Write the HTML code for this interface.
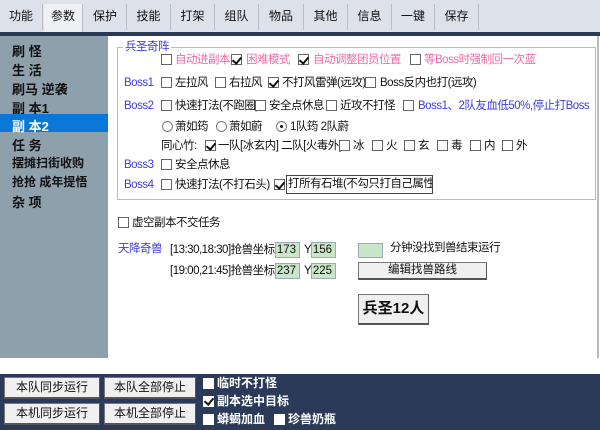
<!DOCTYPE html>
<html><head><meta charset="utf-8"><style>
*{margin:0;padding:0;box-sizing:border-box}
body{width:600px;height:430px;overflow:hidden;background:#fff;font-family:"Liberation Sans","Noto Sans CJK SC",sans-serif;font-size:11.5px;color:#111;position:relative}
.a{position:absolute;white-space:nowrap;line-height:14px;letter-spacing:-0.5px}
.tabs{position:absolute;left:0;top:0;width:600px;height:32px;background:#dde1ea}
.tab{position:absolute;top:4px;height:26px;line-height:24px;text-align:center;font-size:12px;border-right:1px solid #b8bcc6}
.sel{background:#eef0f4;height:28px}
.nav{position:absolute;left:0;top:32px;width:600px;height:4px;background:#2b3a55}
.side{position:absolute;left:0;top:36px;width:108px;height:322px;background:#8fa0ad}
.si{position:absolute;left:12px;font-weight:bold;font-size:13px;color:#111;white-space:nowrap}
.cb{position:absolute;width:11px;height:11px;border:1px solid #666;background:#fff}
.cb.c::after{content:"";position:absolute;left:2px;top:0px;width:4px;height:7px;border:solid #111;border-width:0 2px 2px 0;transform:rotate(40deg)}
.rd{position:absolute;width:11px;height:11px;border:1px solid #777;border-radius:50%;background:#fff}
.rd.c::after{content:"";position:absolute;left:3px;top:3px;width:3px;height:3px;border-radius:50%;background:#111}
.pk{color:#f06aa8}.bl{color:#3a3ae8}
.in{position:absolute;height:16px;background:#c9e6c9;border:1px solid #9ab;text-align:right;padding-right:3px;line-height:14px;font-size:11.5px}
.btn{position:absolute;background:#f0f0f0;border:1px solid #777;border-right-color:#555;border-bottom:2px solid #555;text-align:center;font-size:12px;white-space:nowrap}
.bot{position:absolute;left:0;top:374px;width:600px;height:56px;background:#2b3a58}
.wb{position:absolute;width:11px;height:11px;background:#fff}
.wb.c::after{content:"";position:absolute;left:3px;top:0px;width:4px;height:7px;border:solid #111;border-width:0 2px 2px 0;transform:rotate(40deg)}
.wt{position:absolute;color:#fff;font-weight:bold;font-size:12px;line-height:14px;white-space:nowrap}
</style></head><body>
<div class="tabs">
<div class="tab" style="left:0;width:43px">功能</div>
<div class="tab sel" style="left:44px;width:39px">参数</div>
<div class="tab" style="left:84px;width:43px">保护</div>
<div class="tab" style="left:127px;width:44px">技能</div>
<div class="tab" style="left:171px;width:44px">打架</div>
<div class="tab" style="left:215px;width:44px">组队</div>
<div class="tab" style="left:259px;width:45px">物品</div>
<div class="tab" style="left:304px;width:44px">其他</div>
<div class="tab" style="left:348px;width:44px">信息</div>
<div class="tab" style="left:392px;width:43px">一键</div>
<div class="tab" style="left:435px;width:44px">保存</div>
</div>
<div class="nav"></div>
<div class="side">
<div class="si" style="top:5px">刷 怪</div>
<div class="si" style="top:24px">生 活</div>
<div class="si" style="top:43px">刷马 逆袭</div>
<div class="si" style="top:62px">副 本1</div>
<div style="position:absolute;left:0;top:78px;width:108px;height:18px;background:#0a78d8"></div>
<div class="si" style="top:80px;color:#fff">副 本2</div>
<div class="si" style="top:99px">任 务</div>
<div class="si" style="top:118px;font-size:12px">摆摊扫街收购</div>
<div class="si" style="top:137px;font-size:12px">抢抢 成年提悟</div>
<div class="si" style="top:156px">杂 项</div>
</div>
<div style="position:absolute;left:597px;top:36px;width:2px;height:322px;background:#bbb"></div>
<div style="position:absolute;left:117px;top:47px;width:479px;height:153px;border:1px solid #bbb"></div>
<div class="a bl" style="left:123px;top:40px;background:#fff;padding:0 2px">兵圣奇阵</div>

<div class="cb" style="left:161px;top:54px"></div><div class="a pk" style="left:175px;top:53px">自动进副本</div>
<div class="cb c" style="left:231px;top:54px"></div><div class="a pk" style="left:246px;top:53px">困难模式</div>
<div class="cb c" style="left:298px;top:54px"></div><div class="a pk" style="left:313px;top:53px">自动调整团员位置</div>
<div class="cb" style="left:410px;top:54px"></div><div class="a pk" style="left:424px;top:53px">等Boss时强制回一次蓝</div>

<div class="a bl" style="left:124px;top:76px">Boss1</div>
<div class="cb" style="left:161px;top:77px"></div><div class="a" style="left:175px;top:76px">左拉风</div>
<div class="cb" style="left:215px;top:77px"></div><div class="a" style="left:229px;top:76px">右拉风</div>
<div class="cb c" style="left:268px;top:77px"></div><div class="a" style="left:282px;top:76px">不打风雷弹(远攻)</div>
<div class="cb" style="left:365px;top:77px"></div><div class="a" style="left:380px;top:76px">Boss反内也打(远攻)</div>

<div class="a bl" style="left:124px;top:99px">Boss2</div>
<div class="cb" style="left:161px;top:100px"></div><div class="a" style="left:175px;top:99px">快速打法(不跑圈)</div>
<div class="cb" style="left:255px;top:100px"></div><div class="a" style="left:269px;top:99px">安全点休息</div>
<div class="cb" style="left:326px;top:100px"></div><div class="a" style="left:340px;top:99px">近攻不打怪</div>
<div class="cb" style="left:403px;top:100px"></div><div class="a bl" style="left:418px;top:99px">Boss1、2队友血低50%,停止打Boss</div>

<div class="rd" style="left:162px;top:121px"></div><div class="a" style="left:175px;top:120px">萧如筠</div>
<div class="rd" style="left:216px;top:121px"></div><div class="a" style="left:229px;top:120px">萧如蔚</div>
<div class="rd c" style="left:276px;top:121px"></div><div class="a" style="left:290px;top:120px">1队筠 2队蔚</div>

<div class="a" style="left:161px;top:139px">同心竹:</div>
<div class="cb c" style="left:205px;top:140px"></div><div class="a" style="left:218px;top:139px">一队[冰玄内] 二队[火毒外]</div>
<div class="cb" style="left:339px;top:140px"></div><div class="a" style="left:353px;top:139px">冰</div>
<div class="cb" style="left:372px;top:140px"></div><div class="a" style="left:386px;top:139px">火</div>
<div class="cb" style="left:404px;top:140px"></div><div class="a" style="left:418px;top:139px">玄</div>
<div class="cb" style="left:437px;top:140px"></div><div class="a" style="left:451px;top:139px">毒</div>
<div class="cb" style="left:470px;top:140px"></div><div class="a" style="left:484px;top:139px">内</div>
<div class="cb" style="left:502px;top:140px"></div><div class="a" style="left:516px;top:139px">外</div>

<div class="a bl" style="left:124px;top:158px">Boss3</div>
<div class="cb" style="left:161px;top:159px"></div><div class="a" style="left:175px;top:158px">安全点休息</div>

<div class="a bl" style="left:124px;top:178px">Boss4</div>
<div class="cb" style="left:161px;top:179px"></div><div class="a" style="left:175px;top:178px">快速打法(不打石头)</div>
<div class="cb c" style="left:274px;top:179px"></div>
<div class="a" style="left:286px;top:175px;width:147px;height:19px;line-height:17px;border:1px solid #444;padding:0 1px;overflow:hidden">打所有石堆(不勾只打自己属性的)</div>

<div class="cb" style="left:118px;top:217px"></div><div class="a" style="left:132px;top:216px">虚空副本不交任务</div>

<div class="a bl" style="left:118px;top:242px">天降奇兽</div>
<div class="a" style="left:170px;top:243px">[13:30,18:30]抢兽坐标X</div>
<div class="in" style="left:275px;top:242px;width:25px">173</div>
<div class="a" style="left:304px;top:243px">Y</div>
<div class="in" style="left:311px;top:242px;width:25px">156</div>
<div class="a" style="left:170px;top:264px">[19:00,21:45]抢兽坐标X</div>
<div class="in" style="left:275px;top:263px;width:25px">237</div>
<div class="a" style="left:304px;top:264px">Y</div>
<div class="in" style="left:311px;top:263px;width:25px">225</div>

<div class="in" style="left:358px;top:243px;width:25px;height:15px"></div>
<div class="a" style="left:390px;top:241px">分钟没找到兽结束运行</div>
<div class="btn" style="left:358px;top:262px;width:129px;height:18px;line-height:15px;font-size:11.5px">编辑找兽路线</div>
<div class="btn" style="left:358px;top:294px;width:71px;height:31px;line-height:28px;font-weight:bold;font-size:15px">兵圣12人</div>

<div class="bot"></div>
<div class="btn" style="left:4px;top:377px;width:96px;height:22px;line-height:19px">本队同步运行</div>
<div class="btn" style="left:104px;top:377px;width:92px;height:22px;line-height:19px">本队全部停止</div>
<div class="btn" style="left:4px;top:403px;width:96px;height:22px;line-height:19px">本机同步运行</div>
<div class="btn" style="left:104px;top:403px;width:92px;height:22px;line-height:19px">本机全部停止</div>
<div class="wb" style="left:203px;top:378px"></div><div class="wt" style="left:217px;top:376px">临时不打怪</div>
<div class="wb c" style="left:203px;top:396px"></div><div class="wt" style="left:217px;top:394px">副本选中目标</div>
<div class="wb" style="left:203px;top:414px"></div><div class="wt" style="left:217px;top:412px">蟒蝎加血</div>
<div class="wb" style="left:274px;top:414px"></div><div class="wt" style="left:288px;top:412px">珍兽奶瓶</div>
</body></html>
